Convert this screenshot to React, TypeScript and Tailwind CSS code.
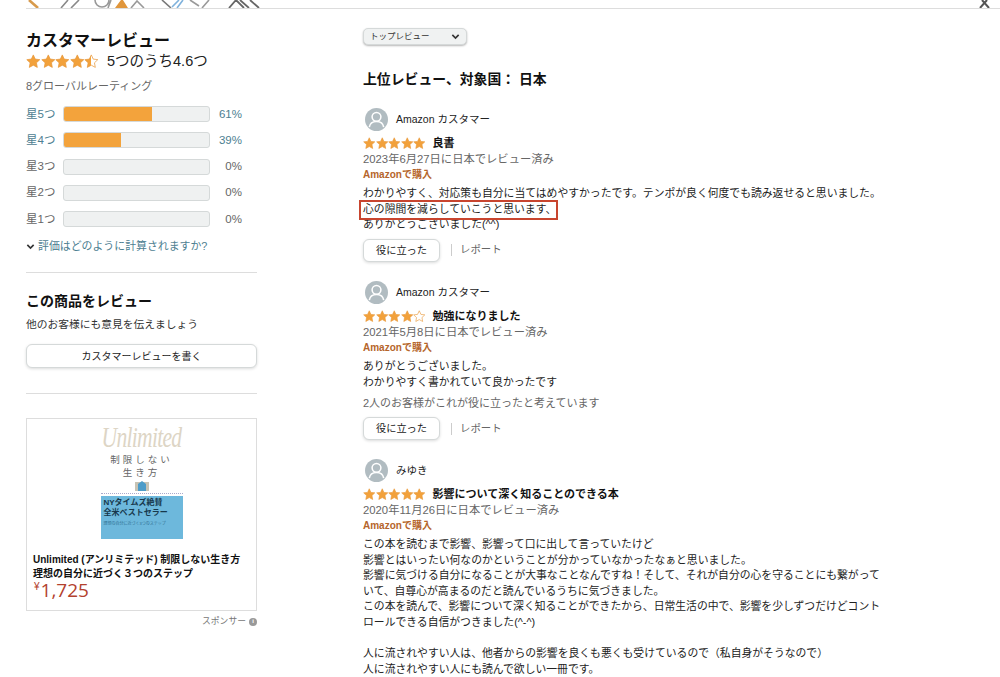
import { ReactNode } from "react";

const FONT = "[font-family:'Liberation_Sans','Noto_Sans_CJK_JP',sans-serif]";
const STAR = "M12 1.5l3.2 6.9 7.5.9-5.5 5.2 1.4 7.5L12 18.4l-6.6 3.6 1.4-7.5L1.3 9.3l7.5-.9z";

function Stars({ value, size, id }: { value: number; size: number; id: string }) {
  return (
    <span className="flex shrink-0">
      {[0, 1, 2, 3, 4].map((i) => {
        const fill = Math.max(0, Math.min(1, value - i));
        const gradId = `${id}-${i}`;
        return (
          <svg key={i} viewBox="0 0 24 24" width={size} height={size} className="block">
            <defs>
              <linearGradient id={gradId}>
                <stop offset={fill} stopColor="#f2a13b" />
                <stop offset={fill} stopColor="#ffffff" />
              </linearGradient>
            </defs>
            <path d={STAR} fill={`url(#${gradId})`} stroke="#e8983a" strokeWidth="1.2" strokeLinejoin="round" />
          </svg>
        );
      })}
    </span>
  );
}

function Avatar() {
  return (
    <svg viewBox="0 0 24 24" width="23" height="23" className="block shrink-0">
      <circle cx="12" cy="12" r="12" fill="#b1bcc1" />
      <circle cx="12" cy="9.2" r="4.6" fill="none" stroke="#fff" strokeWidth="1.6" />
      <path d="M4.5 20c.6-4 3.4-6 7.5-6s6.9 2 7.5 6" fill="none" stroke="#fff" strokeWidth="1.6" />
    </svg>
  );
}

function RatingBar({ label, pct, active }: { label: string; pct: number; active: boolean }) {
  return (
    <div className="flex h-[26.25px] items-center">
      <span className={`w-[37px] text-[11.5px] ${active ? "text-[#4d8091]" : "text-[#666]"}`}>{label}</span>
      <div className="h-[16px] w-[147px] overflow-hidden rounded-[3px] border border-[#d5d9d9] bg-[#eff1f1]">
        <div className="h-full bg-[#f3a33c]" style={{ width: `${pct}%` }} />
      </div>
      <span className={`w-[32px] text-right text-[11.5px] ${active ? "text-[#4d8091]" : "text-[#666]"}`}>{pct}%</span>
    </div>
  );
}

function Actions() {
  return (
    <div className="flex items-center">
      <button className="h-[23px] w-[77px] rounded-[6px] border border-[#d5d9d9] bg-white text-[10.2px] text-[#222] shadow-[0_1px_3px_rgba(15,17,17,0.15)]">
        役に立った
      </button>
      <span className="ml-[11px] h-[12px] w-px bg-[#ccc]" />
      <span className="ml-[8px] text-[10.4px] text-[#666]">レポート</span>
    </div>
  );
}

function Review(props: {
  id: string;
  name: string;
  stars: number;
  title: string;
  date: string;
  children: ReactNode;
}) {
  return (
    <div>
      <div className="flex h-[23px] items-center pl-[2px]">
        <Avatar />
        <span className="ml-[8px] text-[10.5px] text-[#222]">{props.name}</span>
      </div>
      <div className="mt-[4px] flex h-[16px] items-center">
        <Stars value={props.stars} size={12.5} id={props.id} />
        <span className="ml-[7px] text-[11px] font-bold text-[#111]">{props.title}</span>
      </div>
      <div className="h-[16px] text-[11.3px] leading-[16px] text-[#666]">{props.date}</div>
      <div className="h-[16px] text-[10px] font-bold leading-[16px] text-[#b5652b]">Amazonで購入</div>
      <div className="mt-[3px] text-[10.82px] leading-[15.6px] text-[#222]">{props.children}</div>
    </div>
  );
}

function TopStrip() {
  return (
    <div className="relative h-[9px] shrink-0 overflow-hidden">
      <svg width="300" height="8" viewBox="0 0 300 8" className="block" fill="none" strokeWidth="1.6">
        <path d="M29 0l9 8" stroke="#d79a4c" strokeWidth="2.6" />
        <path d="M61 8l7-8M71 8l8-8" stroke="#888" />
        <path d="M95 0a7 7 0 0 0 14 0M108 8l3-8" stroke="#999" />
        <path d="M116 8l6-8 5 8z" fill="#e0963c" stroke="#e0963c" />
        <path d="M131 8l6-7 7 7" stroke="#999" />
        <path d="M162 0l9 8" stroke="#777" />
        <path d="M172 7l7-7M177 8l6-8" stroke="#7fb2dc" />
        <path d="M190 0l9 6M202 8l7-8" stroke="#999" />
        <path d="M229 8l7-8 8 8M240 0l9 8M250 0l9 8" stroke="#666" strokeWidth="1.8" />
      </svg>
      <svg width="14" height="8" viewBox="0 0 14 8" className="absolute right-[8px] top-0" fill="none" stroke="#555" strokeWidth="2">
        <path d="M2 8l7-8M4 0l7 8" />
      </svg>
      <div className="absolute bottom-0 left-[26px] right-0 h-px bg-[#ddd]" />
    </div>
  );
}

function SponsoredCard() {
  return (
    <div className="mt-[24px] h-[193px] w-[231px] border border-[#ddd] bg-white">
      <div className="flex h-[131px] flex-col items-center">
        <div className="mt-[3px] h-[30px] scale-x-[0.72] font-['Liberation_Serif'] text-[30px] italic leading-[30px] tracking-[-1px] text-[#ddd5c5]">
          Unlimited
        </div>
        <div className="mt-[1px] font-['Noto_Sans_CJK_JP'] text-[9.5px] leading-[13px] tracking-[3px] text-[#666]">制限しない</div>
        <div className="font-['Noto_Sans_CJK_JP'] text-[9.5px] leading-[13px] tracking-[3px] text-[#666]">生き方</div>
        <svg viewBox="0 0 14 10" width="14" height="10" className="mt-[2px] block">
          <rect x="0" y="1" width="14" height="9" fill="#c7c3b4" />
          <path d="M3 3l4-3 4 3v7H3z" fill="#4d9cc9" />
        </svg>
        <div className="mt-[2px] h-[3px] w-[82px] border-t border-dotted border-[#aac]" />
        <div className="h-[43px] w-[82px] bg-[#6db8dc] px-[3px] pt-[2px] text-[8px] font-bold leading-[10px] text-[#17384c]">
          <div className="whitespace-nowrap">NYタイムズ絶賛</div>
          <div className="whitespace-nowrap">全米ベストセラー</div>
          <div className="mt-[3px] h-[14px] w-[66px] text-[4px] font-normal leading-[5px] text-[#2f6f90]">
            理想の自分に近づく3つのステップ
          </div>
        </div>
      </div>
      <div className="ml-[6px] mt-[3px] text-[10px] font-bold leading-[14px] text-[#111]">
        <div>Unlimited (アンリミテッド) 制限しない生き方</div>
        <div>理想の自分に近づく３つのステップ</div>
      </div>
      <div className="ml-[7px] -mt-[2px] flex items-start leading-[22px] text-[#b3412e]">
        <span className="text-[10px] leading-[16px]">¥</span>
        <span className="ml-[1px] font-['Open_Sans'] text-[19px] font-medium">1,725</span>
      </div>
    </div>
  );
}

function LeftColumn() {
  return (
    <aside className="w-[231px] shrink-0">
      <h2 className="mt-[22px] text-[16px] font-bold leading-[20px] text-[#111]">カスタマーレビュー</h2>
      <div className="mt-[1px] flex h-[19px] items-center">
        <Stars value={4.5} size={14.6} id="overall" />
        <span className="ml-[8px] text-[14.5px] text-[#222]">5つのうち4.6つ</span>
      </div>
      <div className="mt-[7px] h-[16px] text-[11px] leading-[16px] text-[#666]">8グローバルレーティング</div>
      <div className="mt-[7px]">
        <RatingBar label="星5つ" pct={61} active />
        <RatingBar label="星4つ" pct={39} active />
        <RatingBar label="星3つ" pct={0} active={false} />
        <RatingBar label="星2つ" pct={0} active={false} />
        <RatingBar label="星1つ" pct={0} active={false} />
      </div>
      <div className="mt-[6px] flex h-[16px] items-center text-[10.9px] text-[#4d8091]">
        <svg viewBox="0 0 10 10" width="9" height="9" fill="none" stroke="#333" strokeWidth="1.8">
          <path d="M1.5 3.2L5 6.8l3.5-3.6" />
        </svg>
        <span className="ml-[3px]">評価はどのように計算されますか?</span>
      </div>
      <div className="mt-[18px] h-px bg-[#ddd]" />
      <h3 className="mt-[18px] text-[14px] font-bold leading-[20px] text-[#111]">この商品をレビュー</h3>
      <div className="mt-[5px] text-[10.75px] leading-[16px] text-[#333]">他のお客様にも意見を伝えましょう</div>
      <button className="mt-[12px] h-[24px] w-full rounded-[6px] border border-[#d5d9d9] bg-white text-[10px] text-[#222] shadow-[0_1px_3px_rgba(15,17,17,0.15)]">
        カスタマーレビューを書く
      </button>
      <div className="mt-[25px] h-px bg-[#ddd]" />
      <SponsoredCard />
      <div className="mt-[4px] flex items-center justify-end text-[8.8px] text-[#777]">
        <span>スポンサー</span>
        <span className="ml-[3px] flex h-[8px] w-[8px] items-center justify-center rounded-full bg-[#999] text-[6px] font-bold text-white">i</span>
      </div>
    </aside>
  );
}

function RightColumn() {
  return (
    <main className="ml-[106px] w-[530px] shrink-0">
      <div className="mt-[19px] flex h-[17px] w-[104px] items-center justify-between rounded-[5px] border border-[#d5d9d9] bg-[#f0f2f2] pl-[6px] pr-[6px] text-[8.5px] text-[#333] shadow-[0_1px_2px_rgba(15,17,17,0.3)]">
        <span>トップレビュー</span>
        <svg viewBox="0 0 10 10" width="9" height="9" fill="none" stroke="#333" strokeWidth="1.8">
          <path d="M1.5 3.2L5 6.8l3.5-3.6" />
        </svg>
      </div>
      <h2 className="mt-[24px] text-[13.85px] font-bold leading-[20px] text-[#111]">上位レビュー、対象国： 日本</h2>
      <div className="mt-[19px]">
        <Review id="r1" name="Amazon カスタマー" stars={5} title="良書" date="2023年6月27日に日本でレビュー済み">
          <div>わかりやすく、対応策も自分に当てはめやすかったです。テンポが良く何度でも読み返せると思いました。</div>
          <div className="relative">
            心の隙間を減らしていこうと思います、
            <span className="absolute left-[-4px] top-[-2px] h-[20px] w-[199px] border-2 border-[#c8452f]" />
          </div>
          <div>ありがとうございました(^^)</div>
        </Review>
        <div className="mt-[6px]">
          <Actions />
        </div>
      </div>
      <div className="mt-[19.5px]">
        <Review id="r2" name="Amazon カスタマー" stars={4} title="勉強になりました" date="2021年5月8日に日本でレビュー済み">
          <div>ありがとうございました。</div>
          <div>わかりやすく書かれていて良かったです</div>
        </Review>
        <div className="mt-[5px] h-[16px] text-[11px] leading-[16px] text-[#666]">2人のお客様がこれが役に立ったと考えています</div>
        <div className="mt-[6px]">
          <Actions />
        </div>
      </div>
      <div className="mt-[18.5px]">
        <Review id="r3" name="みゆき" stars={5} title="影響について深く知ることのできる本" date="2020年11月26日に日本でレビュー済み">
          <div>この本を読むまで影響、影響って口に出して言っていたけど</div>
          <div>影響とはいったい何なのかということが分かっていなかったなぁと思いました。</div>
          <div>影響に気づける自分になることが大事なことなんですね！そして、それが自分の心を守ることにも繋がって</div>
          <div>いて、自尊心が高まるのだと読んでいるうちに気づきました。</div>
          <div>この本を読んで、影響について深く知ることができたから、日常生活の中で、影響を少しずつだけどコント</div>
          <div>ロールできる自信がつきました(^-^)</div>
          <div className="h-[15.6px]" />
          <div>人に流されやすい人は、他者からの影響を良くも悪くも受けているので（私自身がそうなので）</div>
          <div>人に流されやすい人にも読んで欲しい一冊です。</div>
        </Review>
      </div>
    </main>
  );
}

export default function App() {
  return (
    <div className={`flex h-[677px] w-[1000px] flex-col overflow-hidden bg-white ${FONT}`}>
      <TopStrip />
      <div className="flex pl-[26px]">
        <LeftColumn />
        <RightColumn />
      </div>
    </div>
  );
}
